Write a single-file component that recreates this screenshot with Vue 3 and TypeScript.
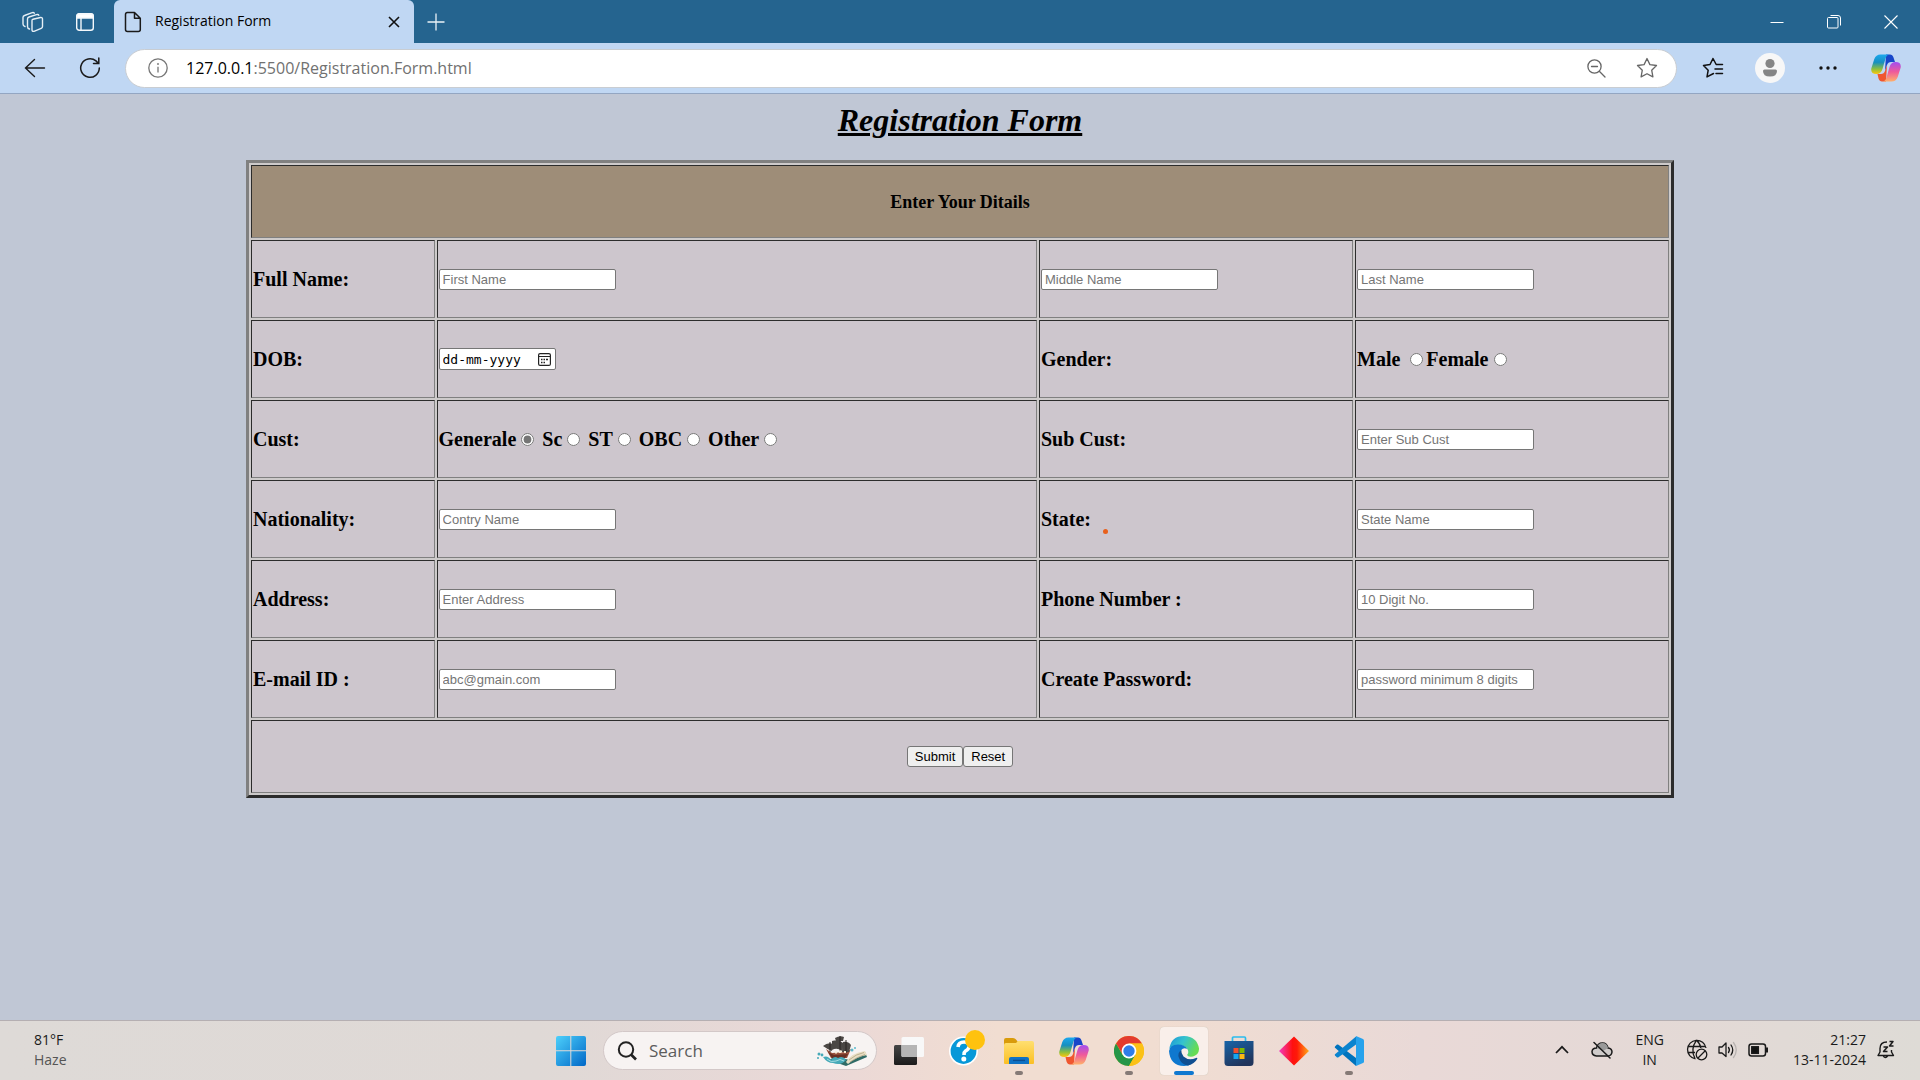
<script setup lang="ts">
import { ref } from 'vue'

interface Choice {
  value: string
  text: string
}

const casts: Choice[] = [
  { value: 'general', text: 'Generale' },
  { value: 'sc', text: 'Sc' },
  { value: 'st', text: 'ST' },
  { value: 'obc', text: 'OBC' },
  { value: 'other', text: 'Other' },
]

const cast = ref('general')
const gender = ref('')
const search = ref('')
</script>

<template>
  <div class="screen">
    <header class="tabs">
      <button class="plain workspaces" aria-label="Workspaces">
        <svg width="22" height="22" viewBox="0 0 22 22" fill="none" stroke="#e6eff6" stroke-width="1.4" stroke-linejoin="round" stroke-linecap="round">
          <path d="M10 9.5 Q10 8.500 11 8.200 L18.500 6.500 Q20.500 6.200 20.500 8 L20.500 15.500 Q20.500 16.800 19.200 17.300 L12 20.300 Q10 20.800 10 18.800 Z" />
          <path d="M7.500 18 Q5.500 17.500 5.500 15.500 L5.500 8 Q5.500 6.500 7 6 L14.500 3.600 Q16.300 3.100 16.800 4.300" />
          <path d="M3 15.500 Q1 15 1 13 L1 6.500 Q1 5 2.500 4.500 L9.500 1.800 Q11.500 1 12.300 2.200" />
        </svg>
      </button>
      <button class="plain actions" aria-label="Tab actions">
        <svg width="18" height="18" viewBox="0 0 18 18" fill="none" stroke="#f4f8fb" stroke-width="1.400">
          <rect x="0.700" y="0.700" width="16.600" height="16.600" rx="2.500" />
          <path d="M1 3 Q1 1 3 1 L15 1 Q17 1 17 3 L17 5 L1 5 Z" fill="#fff" />
          <path d="M5 5 V17" />
        </svg>
      </button>
      <div class="tab">
        <svg width="18" height="22" viewBox="0 0 18 22" fill="none" stroke="#1a1a1a" stroke-width="1.500" stroke-linejoin="round">
          <path d="M3 1.500 H10.500 L16.300 7.300 V18.500 Q16.300 20.500 14.300 20.500 H3.500 Q1.500 20.500 1.500 18.500 V3.500 Q1.500 1.500 3.500 1.500 Z M10.500 1.500 V7.300 H16.300" />
        </svg>
        <span class="tab-title">Registration Form</span>
        <button class="plain" aria-label="Close tab">
          <svg width="12" height="12" viewBox="0 0 12 12" stroke="#111" stroke-width="1.600"><path d="M1 1 L11 11 M11 1 L1 11" /></svg>
        </button>
      </div>
      <button class="plain new-tab" aria-label="New tab">
        <svg width="18" height="18" viewBox="0 0 18 18" stroke="#eaf2f8" stroke-width="1.300"><path d="M9 0.500 V17.500 M0.500 9 H17.500" /></svg>
      </button>
      <div class="window-buttons">
        <button class="plain" aria-label="Minimize">
          <svg width="14" height="14" viewBox="0 0 14 14" stroke="#fff"><path d="M0.500 7.500 H13.500" /></svg>
        </button>
        <button class="plain" aria-label="Restore">
          <svg width="14" height="14" viewBox="0 0 14 14" fill="none" stroke="#fff"><rect x="0.500" y="2.500" width="10.500" height="10.500" rx="1" /><path d="M3.500 0.500 H11 Q13.500 0.500 13.500 3 V10.500" /></svg>
        </button>
        <button class="plain" aria-label="Close">
          <svg width="14" height="14" viewBox="0 0 14 14" stroke="#fff" stroke-width="1.100"><path d="M0.500 0.500 L13.500 13.500 M13.500 0.500 L0.500 13.500" /></svg>
        </button>
      </div>
    </header>

    <nav class="toolbar">
      <button class="plain back" aria-label="Back">
        <svg width="22" height="20" viewBox="0 0 22 20" fill="none" stroke="#1a1a1a" stroke-width="1.400" stroke-linecap="round"><path d="M10.500 1.500 L1.500 10 L10.500 18.500 M1.500 10 H20.500" /></svg>
      </button>
      <button class="plain reload" aria-label="Reload">
        <svg width="22" height="22" viewBox="0 0 22 22" fill="none" stroke="#1a1a1a" stroke-width="1.500" stroke-linecap="round"><path d="M20.300 11 A9.300 9.300 0 1 1 17 3.900 L19.300 6.300 M19.800 1 V6.500 H14.500" /></svg>
      </button>
      <div class="address">
        <svg width="20" height="20" viewBox="0 0 20 20" fill="none" stroke="#767676" stroke-width="1.300"><circle cx="10" cy="10" r="9.200" /><path d="M10 8.800 V14.500" /><circle cx="10" cy="6" r="0.700" fill="#767676" stroke-width="0.600" /></svg>
        <span class="url"><b>127.0.0.1</b>:5500/Registration.Form.html</span>
        <button class="plain zoom" aria-label="Zoom out">
          <svg width="19" height="19" viewBox="0 0 19 19" fill="none" stroke="#666" stroke-width="1.300" stroke-linecap="round"><circle cx="7.500" cy="7.500" r="6.600" /><path d="M12.300 12.300 L18 18 M4.500 7.500 H10.500" /></svg>
        </button>
        <button class="plain" aria-label="Add to favorites">
          <svg width="22" height="22" viewBox="0 0 22 22" fill="none" stroke="#666" stroke-width="1.300" stroke-linejoin="round"><path d="M11 1.500 L13.900 7.600 L20.500 8.500 L15.700 13.200 L16.900 19.900 L11 16.700 L5.100 19.900 L6.300 13.200 L1.500 8.500 L8.100 7.600 Z" /></svg>
        </button>
      </div>
      <button class="plain favorites" aria-label="Favorites">
        <svg width="22" height="22" viewBox="0 0 22 22" fill="none" stroke="#111" stroke-width="1.500" stroke-linejoin="round" stroke-linecap="round"><path d="M20.500 7.500 H14.200 L11 1.500 L8 7.500 L1.500 8.500 L6.200 13.200 L5 19.900 L11.500 16.500 M13 12 H20.500 M14 16.500 H20.500" /></svg>
      </button>
      <button class="plain profile" aria-label="Profile">
        <svg width="30" height="30" viewBox="0 0 30 30"><circle cx="15" cy="15" r="15" fill="#f7f7f7" /><circle cx="15" cy="10.500" r="4.600" fill="#858585" /><path d="M9.500 16.500 H20.500 Q22 16.500 22 18 Q22 23.500 15 23.500 Q8 23.500 8 18 Q8 16.500 9.500 16.500 Z" fill="#858585" /></svg>
      </button>
      <button class="plain more" aria-label="Settings and more">
        <svg width="18" height="4" viewBox="0 0 18 4" fill="#111"><circle cx="2" cy="2" r="1.700" /><circle cx="9" cy="2" r="1.700" /><circle cx="16" cy="2" r="1.700" /></svg>
      </button>
      <button class="plain" aria-label="Copilot">
        <svg width="30" height="28" viewBox="0 0 30 28"><use href="#copilot" /></svg>
      </button>
    </nav>

    <main class="page">
      <h1>Registration Form</h1>
      <form @submit.prevent>
        <table>
          <colgroup>
            <col class="col-label" />
            <col />
            <col class="col-side" />
            <col class="col-side" />
          </colgroup>
          <thead>
            <tr>
              <th colspan="4" class="caption">Enter Your Ditails</th>
            </tr>
          </thead>
          <tbody>
            <tr>
              <th><label for="first">Full Name:</label></th>
              <td><input id="first" class="field" type="text" placeholder="First Name" /></td>
              <td><input class="field" type="text" placeholder="Middle Name" aria-label="Middle Name" /></td>
              <td><input class="field" type="text" placeholder="Last Name" aria-label="Last Name" /></td>
            </tr>
            <tr>
              <th><label for="dob">DOB:</label></th>
              <td>
                <div class="date">
                  <input id="dob" type="text" placeholder="dd-mm-yyyy" />
                  <button type="button" class="plain" aria-label="Open calendar">
                    <svg width="13" height="13" viewBox="0 0 13 13" fill="none" stroke="#222"><rect x="0.600" y="0.600" width="11.800" height="11.800" rx="1.500" stroke-width="1.200" /><path d="M1 3.500 H12" /><path d="M5.500 6.500 H7 M8 6.500 H10 M3 6.500 H4.500 M3 9.500 H4.500 M5.500 9.500 H7" stroke-width="1.300" /></svg>
                  </button>
                </div>
              </td>
              <th>Gender:</th>
              <td>
                <label>Male <input v-model="gender" type="radio" name="gender" value="male" /></label><label>Female<input v-model="gender" type="radio" name="gender" value="female" /></label>
              </td>
            </tr>
            <tr>
              <th>Cust:</th>
              <td>
                <template v-for="c in casts" :key="c.value"><label>{{ c.text }}<input v-model="cast" type="radio" name="cast" :value="c.value" /></label>{{ ' ' }}</template>
              </td>
              <th><label for="sub">Sub Cust:</label></th>
              <td><input id="sub" class="field" type="text" placeholder="Enter Sub Cust" /></td>
            </tr>
            <tr>
              <th><label for="nation">Nationality:</label></th>
              <td><input id="nation" class="field" type="text" placeholder="Contry Name" /></td>
              <th class="state"><label for="state">State:</label><i class="pointer"></i></th>
              <td><input id="state" class="field" type="text" placeholder="State Name" /></td>
            </tr>
            <tr>
              <th><label for="address">Address:</label></th>
              <td><input id="address" class="field" type="text" placeholder="Enter Address" /></td>
              <th><label for="phone">Phone Number :</label></th>
              <td><input id="phone" class="field" type="text" placeholder="10 Digit No." /></td>
            </tr>
            <tr>
              <th><label for="mail">E-mail ID :</label></th>
              <td><input id="mail" class="field" type="email" placeholder="abc@gmain.com" /></td>
              <th><label for="password">Create Password:</label></th>
              <td><input id="password" class="field" type="password" placeholder="password minimum 8 digits" /></td>
            </tr>
            <tr>
              <td colspan="4" class="submit-row">
                <div class="buttons">
                  <button type="submit" class="push">Submit</button>
                  <button type="reset" class="push">Reset</button>
                </div>
              </td>
            </tr>
          </tbody>
        </table>
      </form>
    </main>

    <footer class="taskbar">
      <div class="weather">
        <span>81°F</span>
        <span class="haze">Haze</span>
      </div>

      <div class="dock">
        <button class="plain app" aria-label="Start">
          <svg width="30" height="30" viewBox="0 0 30 30"><path d="M0 2 Q0 0 2 0 H14.300 V14.300 H0 Z M15.300 0 H28 Q30 0 30 2 V14.300 H15.300 Z M0 15.300 H14.300 V30 H2 Q0 30 0 28 Z M15.300 15.300 H30 V28 Q30 30 28 30 H15.300 Z" fill="url(#win)" /></svg>
        </button>
        <label class="search">
          <svg width="20" height="20" viewBox="0 0 20 20" fill="none" stroke="#222" stroke-width="2"><circle cx="9" cy="8.500" r="7.200" /><path d="M14 13.500 L19 18.500" stroke-width="2.600" /></svg>
          <input v-model="search" type="text" placeholder="Search" aria-label="Search" />
          <svg width="52" height="32" viewBox="0 0 52 32">
            <path d="M13 25 L30 31 L51 22 L49 17 L33 25 L20 21 Z" fill="#2f6b66" />
            <path d="M30 27 Q35 18 49 16 L51 20 Q40 22 32 29 Z" fill="#e9dfc4" />
            <path d="M33 25 Q40 19 48 17.500 M34 27 Q41 22 49 19.500" stroke="#a99b7c" stroke-width="0.700" fill="none" />
            <path d="M10 14 L15 23 H31 L35 14 L30 17 L16 18 Z" fill="#98503c" />
            <path d="M12 17 L16 23 H29 L32 19 L18 20 Z" fill="#693024" />
            <path d="M16 6 Q23 4 27 8 L26 16 Q21 12 16 15 Z M27 7 Q32 6 35 10 L33 17 H26 Z M7 11 Q12 7 17 9 L16 16 Q11 14 7 11 Z M19 3 Q24 0 28 2 L27 6 H20 Z" fill="#4b4744" />
            <path d="M24 1 V16 M30 5 V18 M14 7 V17" stroke="#2b2422" />
            <path d="M19 18.500 V16.500 H21 V18.500 Z M23 18 V15.500 H25.500 V18 Z M28 18 V16 H30 V18 Z" fill="#f6ead2" />
            <path d="M7 22 Q12 20 15 25 Q18 20 22 23 Q27 20 30 25 Q25 31 17 28 Q11 28 7 22 Z" fill="#46a9b8" />
            <path d="M11 24 Q15 28 20 26 Q24 23 28 26" stroke="#a5dde2" fill="none" />
            <circle cx="3" cy="19" r="1.500" fill="#46a9b8" /><circle cx="2" cy="23" r="1" fill="#46a9b8" /><circle cx="6" cy="20" r="1.400" fill="#46a9b8" /><circle cx="36" cy="15" r="1.500" fill="#5bb8cb" /><circle cx="39" cy="13" r="1" fill="#5bb8cb" />
          </svg>
        </label>
        <div class="apps">
          <button class="plain app" aria-label="Task view">
            <svg width="30" height="28" viewBox="0 0 30 28"><rect y="8" width="23" height="20" rx="1.500" fill="url(#dark)" /><rect x="7.500" width="22.500" height="20" rx="1.500" fill="#f8f8f8" /><path d="M7.500 8 H23 V20 H9 Q7.500 20 7.500 18.500 Z" fill="#b5b5b5" /></svg>
          </button>
          <button class="plain app" aria-label="Get help">
            <svg class="help" width="30" height="30" viewBox="0 6 30 30">
              <circle cx="14.500" cy="21" r="14.500" fill="#fff" /><circle cx="14.500" cy="21" r="12.900" fill="#0798d8" />
              <path d="M9 17 Q9.500 12 15 12 Q20.500 12 20 17 Q19.500 19.500 16.500 21 Q15 22 15 25" fill="none" stroke="#fff" stroke-width="3.600" /><circle cx="14.800" cy="29" r="2.500" fill="#fff" />
              <circle cx="26" cy="10" r="10" fill="#ffc20e" />
            </svg>
          </button>
          <button class="plain app running" aria-label="File Explorer">
            <svg width="30" height="28" viewBox="0 0 30 28"><path d="M0 3 Q0 1 2 1 H9 Q11 1 12 2.500 L14 5 H28 V12 H0 Z" fill="#d99b0b" /><path d="M0 8 Q0 6 2 6 H12 L14 4 H28 Q30 4 30 6 V26 Q30 27 29 27 H1 Q0 27 0 26 Z" fill="url(#folder)" /><path d="M5 27 V22 Q5 20 7 20 H23 Q25 20 25 22 V27 Z" fill="#0f72c4" /><rect x="9" y="22.700" width="12" height="1.400" fill="#0b4e91" /></svg>
          </button>
          <button class="plain app" aria-label="Copilot">
            <svg width="30" height="28" viewBox="0 0 30 28"><use href="#copilot" /></svg>
          </button>
          <button class="plain app running" aria-label="Chrome">
            <svg width="30" height="30" viewBox="0 0 30 30"><circle cx="15" cy="15" r="15" fill="#fbc116" /><path d="M2 7.500 A15 15 0 0 1 28 7.500 H15 L9 19 Z" fill="#e33b2e" /><path d="M2 7.500 L8.500 18.700 L21.500 18.700 L15 30 A15 15 0 0 1 2 7.500 Z" fill="#269547" /><path d="M15 7.500 H28 A15 15 0 0 1 15 30 L21.500 18.700 Z" fill="#fbc116" /><circle cx="15" cy="15" r="7.400" fill="#fff" /><circle cx="15" cy="15" r="5.700" fill="#2f7de9" /></svg>
          </button>
          <button class="plain app active" aria-label="Edge">
            <svg width="30" height="30" viewBox="0 0 30 30">
              <path d="M0.300 13 Q2 0 15 0 Q28 0.500 30 12.500 Q30.200 18.500 24 20.500 Q18.500 21.200 18.200 18.800 Q20.500 16 18 12.500 Q14 8.500 8 9.500 Q2.500 10.500 0.300 13 Z" fill="url(#edge-top)" />
              <path d="M0 15 Q1 8.500 9 8.500 Q16 8.700 18.200 13 Q14.500 11.200 12.300 14 Q9.500 18 14 23 Q18 27 23 27.500 Q19.500 30 15 30 Q1 29.500 0 15 Z" fill="#0f78cf" />
              <path d="M12.300 14 Q8 17 10 22 Q12.500 29 19 29.500 Q25.500 28 28.300 22.700 Q28.500 21.500 27 22 Q19.500 25 14.500 20.500 Q12 17.500 12.300 14 Z" fill="#104f91" />
            </svg>
          </button>
          <button class="plain app" aria-label="Microsoft Store">
            <svg width="30" height="30" viewBox="0 0 30 30"><path d="M8.500 6 V2 Q8.500 1 9.500 1 H20.500 Q21.500 1 21.500 2 V6" fill="none" stroke="#2bbcee" stroke-width="1.700" /><path d="M0.500 5 H29.500 V26.500 Q29.500 30 26 30 H4 Q0.500 30 0.500 26.500 Z" fill="url(#store)" /><path d="M9.500 12 H14.500 V17 H9.500 Z" fill="#f2502b" /><path d="M15.500 12 H20.500 V17 H15.500 Z" fill="#7eb900" /><path d="M9.500 18 H14.500 V23 H9.500 Z" fill="#16a7f0" /><path d="M15.500 18 H20.500 V23 H15.500 Z" fill="#fcb813" /></svg>
          </button>
          <button class="plain app" aria-label="Diamond">
            <svg width="30" height="30" viewBox="0 0 30 30"><path d="M15 0.500 L30 15 L15 29.500 L0 15 Z" fill="url(#gem)" /></svg>
          </button>
          <button class="plain app running" aria-label="Visual Studio Code">
            <svg width="30" height="30" viewBox="0 0 30 30"><path d="M1 10.500 L3 8.500 Q3.700 8.200 4.500 8.700 L22 22 V30 L1 11.800 Q0.500 11.200 1 10.500 Z" fill="#0073bd" /><path d="M1 19.500 L3 21.500 Q3.700 21.800 4.500 21.300 L22 8.500 V0.500 L1 18.300 Q0.500 18.800 1 19.500 Z" fill="#0b84cf" /><path d="M22 0 L29 3 Q30 3.500 30 4.500 V25.500 Q30 26.500 29 27 L22 30 Z" fill="#27a2ec" /></svg>
          </button>
        </div>
      </div>

      <div class="tray">
        <svg class="spaced" width="14" height="9" viewBox="0 0 14 9" fill="none" stroke="#1a1a1a" stroke-width="1.700"><path d="M1 8 L7 1.800 L13 8" /></svg>
        <svg class="spaced" width="22" height="18" viewBox="0 0 22 18" fill="none" stroke="#1a1a1a" stroke-width="1.500" stroke-linecap="round"><path d="M5.500 15 Q1 14.500 1 10.500 Q1.500 7 5.500 7 Q6.500 2 11.500 2 Q16 2 17 7 Q21 7.500 21 11 Q20.500 15 16.500 15 Z" fill="#cfcbca" /><path d="M6 7 Q7 2 11.500 2 Q16 2 17 7 L12 10 Z" fill="#999" stroke="none" /><path d="M3 1.500 L19 17" /></svg>
        <span class="lang spaced">ENG<br />IN</span>
        <svg width="22" height="22" viewBox="0 0 22 22" fill="none" stroke="#1a1a1a" stroke-width="1.300"><path d="M20 9 A9.300 9.300 0 1 0 9.500 19.800 M1.500 7.500 H19.500 M1.500 13.500 H9 M9 19.500 Q4 10.500 10.500 1.200 M10.500 1.200 Q14.500 5 14.800 9" /><circle cx="15.500" cy="15.500" r="5.300" /><path d="M12 19 L19 12" /></svg>
        <svg width="20" height="18" viewBox="0 0 20 18" fill="none" stroke="#1a1a1a" stroke-width="1.300" stroke-linejoin="round" stroke-linecap="round"><path d="M1 6 H4 L8 2 V15.500 L4 12 H1 Z M10.500 6.500 Q12.300 9 10.500 11.500 M13 4 Q16.500 9 13 14" /><path d="M15.500 1.500 Q21 9 15.500 16.500" stroke="#b9b3b1" /></svg>
        <svg width="21" height="14" viewBox="0 0 21 14" fill="none" stroke="#1a1a1a" stroke-width="1.500"><rect x="1" y="1" width="16.500" height="12" rx="2.500" /><rect x="3.800" y="3.800" width="6.500" height="6.500" fill="#111" /><path d="M19 4.500 V9.500" stroke-width="2" /></svg>
        <span class="clock">21:27<br />13-11-2024</span>
        <svg width="18" height="19" viewBox="0 0 18 19" fill="none" stroke="#1a1a1a" stroke-width="1.400" stroke-linejoin="round"><path d="M10 2 Q3 2 3 8.500 V12 L1 15.500 H16.500 L14.500 12 V10 M6 15.500 Q8 19.500 11 15.500" /><path d="M6.500 7 H10.500 L6.500 11.500 H10.500 M12.500 1.500 H16 L12.500 6 H16.500" stroke-width="1.500" /></svg>
      </div>
    </footer>

    <svg class="defs" width="0" height="0" aria-hidden="true">
      <defs>
        <linearGradient id="win" x1="0" y1="0" x2="1" y2="1"><stop offset="0" stop-color="#4dd0fb" /><stop offset="1" stop-color="#0067c7" /></linearGradient>
        <linearGradient id="dark" x1="0" y1="0" x2="0" y2="1"><stop offset="0" stop-color="#454545" /><stop offset="1" stop-color="#1b1b1b" /></linearGradient>
        <linearGradient id="folder" x1="0" y1="0" x2="0" y2="1"><stop offset="0" stop-color="#ffdf70" /><stop offset="1" stop-color="#fbbf24" /></linearGradient>
        <linearGradient id="edge-top" x1="0" y1="0" x2="1" y2="0.400"><stop offset="0" stop-color="#1b94d8" /><stop offset="0.500" stop-color="#35c3ce" /><stop offset="1" stop-color="#66dc54" /></linearGradient>
        <linearGradient id="store" x1="0" y1="0" x2="0.500" y2="1"><stop offset="0" stop-color="#1764a8" /><stop offset="1" stop-color="#21355c" /></linearGradient>
        <linearGradient id="gem"><stop offset="0" stop-color="#f33cc0" /><stop offset="0.450" stop-color="#ff1010" /><stop offset="0.600" stop-color="#ff1a08" /><stop offset="1" stop-color="#ffab19" /></linearGradient>
        <linearGradient id="cop-left" x1="0" y1="0" x2="0" y2="1"><stop offset="0" stop-color="#1ba8ee" /><stop offset="0.400" stop-color="#168fc0" /><stop offset="0.750" stop-color="#8fbf3c" /><stop offset="1" stop-color="#ffc60b" /></linearGradient>
        <linearGradient id="cop-right" x1="0" y1="0" x2="0" y2="1"><stop offset="0" stop-color="#a24df0" /><stop offset="0.500" stop-color="#ef5a9b" /><stop offset="1" stop-color="#ffb06a" /></linearGradient>
        <g id="copilot">
          <path d="M15 0.500 H19 Q21.500 0.500 22.500 3.500 L24 8 H20 Q17 8 16 11 L14 17 Z" fill="#1746c9" />
          <path d="M15 27.500 H11 Q8.500 27.500 7.500 24.500 L6.500 20 H10 Q13 20 14 17 L16 11 Z" fill="#f0562f" />
          <path d="M9.500 0.500 H18 Q15.500 1 14.500 4.500 L11.500 15 Q10 20 5.500 20 Q-0.500 20 0.300 14.500 L3.300 5 Q5 0.500 9.500 0.500 Z" fill="url(#cop-left)" />
          <path d="M20.500 27.500 H12 Q14.500 27 15.500 23.500 L18.500 13 Q20 8 24.500 8 Q30.500 8 29.700 13.500 L26.700 23 Q25 27.500 20.500 27.500 Z" fill="url(#cop-right)" />
        </g>
      </defs>
    </svg>
  </div>
</template>

<style>
body {
  margin: 0;
}
</style>

<style scoped>
.screen {
  display: flex;
  flex-direction: column;
  min-height: 100vh;
  background: #c0c7d5;
  color: #000;
  font-family: "Open Sans", "Noto Sans", sans-serif;
}
.screen svg {
  display: block;
  flex: none;
}
.screen .defs {
  position: absolute;
}
.plain {
  display: flex;
  align-items: center;
  justify-content: center;
  padding: 0;
  border: 0;
  background: none;
}

.tabs {
  display: flex;
  align-items: center;
  height: 43px;
  background: #25648f;
}
.workspaces {
  margin-left: 22px;
}
.actions {
  margin-left: 32px;
}
.tab {
  display: flex;
  align-items: center;
  box-sizing: border-box;
  width: 300px;
  height: 43px;
  margin-left: 20px;
  padding: 0 14px 0 10px;
  border-radius: 6px 6px 0 0;
  background: #c0d7f3;
}
.tab-title {
  flex: 1;
  margin-left: 13px;
  padding-bottom: 2px;
  font-size: 14px;
  line-height: 20px;
}
.new-tab {
  margin-left: 13px;
}
.window-buttons {
  display: flex;
  gap: 43px;
  margin-left: auto;
  padding-right: 22px;
}

.toolbar {
  display: flex;
  align-items: center;
  height: 50px;
  padding: 0 19px 0 24px;
  border-bottom: 1px solid #93a6c2;
  background: #c0d7f3;
}
.reload {
  margin-left: 33px;
}
.address {
  display: flex;
  flex: 1;
  align-items: center;
  box-sizing: border-box;
  height: 39px;
  margin-left: 24px;
  padding: 0 18px 0 22px;
  border: 1px solid #c9cdd2;
  border-radius: 20px;
  background: #fff;
}
.url {
  flex: 1;
  margin-left: 18px;
  color: #717171;
  font-size: 16px;
  line-height: 24px;
}
.url b {
  color: #000;
  font-weight: 400;
}
.zoom {
  margin-right: 30px;
}
.favorites {
  margin-left: 25px;
}
.profile {
  margin-left: 31px;
}
.more {
  margin: 0 34px;
}

.page {
  flex: 1;
  padding: 8px;
  font-family: "Liberation Serif", serif;
}
h1 {
  margin: 0 0 21px;
  font-size: 32px;
  font-style: italic;
  line-height: 37px;
  text-align: center;
  text-decoration: underline;
}
table {
  width: 75%;
  margin: 0 auto;
  border: 3px solid;
  border-color: #808080 #2c2c2c #2c2c2c #808080;
  border-spacing: 2px;
  background: #cdcaca;
  table-layout: fixed;
}
.col-label {
  width: 13%;
}
.col-side {
  width: 314px;
}
th,
td {
  box-sizing: border-box;
  height: 78px;
  padding: 1px;
  border: 1px solid;
  border-color: #2c2c2c #808080 #808080 #2c2c2c;
  background: #cdc6cd;
  font-size: 20px;
  font-weight: 700;
  line-height: 24px;
  text-align: left;
}
.caption {
  height: 73px;
  background: #9e8d78;
  font-size: 18px;
  text-align: center;
}
.submit-row {
  height: 73px;
}
.field,
.date {
  display: block;
  box-sizing: border-box;
  width: 177px;
  height: 21px;
  margin: 0;
  padding: 1px 3px;
  border: 1px solid #767676;
  border-radius: 2px;
  background: #fff;
  font-family: "Liberation Sans", sans-serif;
  font-size: 13px;
}
.field::placeholder {
  color: #757575;
}
.date {
  display: flex;
  align-items: center;
  justify-content: space-between;
  width: 117px;
  height: 22px;
  padding: 0 4px 0 3px;
}
.date input {
  width: 88px;
  padding: 0;
  border: 0;
  background: none;
  font-family: "DejaVu Sans Mono", monospace;
  font-size: 13px;
}
.date input::placeholder {
  color: #000;
}
input[type="radio"] {
  width: 13px;
  height: 13px;
  margin: 3px 3px 0 5px;
  accent-color: #757575;
}
.state {
  position: relative;
}
.pointer {
  position: absolute;
  top: 48px;
  left: 63px;
  width: 5px;
  height: 5px;
  border-radius: 50%;
  background: #e8601c;
}
.buttons {
  display: flex;
  justify-content: center;
}
.push {
  height: 21px;
  padding: 0 7px;
  border: 1px solid #767676;
  border-radius: 3px;
  background: #efefef;
  color: #000;
  font-family: "Liberation Sans", sans-serif;
  font-size: 13px;
}

.taskbar {
  display: grid;
  grid-template-columns: 1fr auto 1fr;
  align-items: center;
  box-sizing: border-box;
  height: 60px;
  border-top: 1px solid #b5afb2;
  background: linear-gradient(90deg, #dedad7 0%, #dfd9d6 28%, #ead8d7 43%, #f1ddd1 52%, #f1ddd1 60%, #e9d9d7 74%, #e4d9d6 86%, #dedbd6 100%);
  font-size: 14px;
  line-height: 20px;
  color: #1a1a1a;
}
.weather {
  display: flex;
  flex-direction: column;
  padding: 0 0 2px 34px;
}
.haze {
  color: #555;
}
.dock {
  display: flex;
  align-items: center;
  gap: 8px;
}
.apps {
  display: flex;
  gap: 7px;
}
.app {
  position: relative;
  width: 48px;
  height: 48px;
  border-radius: 4px;
}
.help {
  overflow: visible;
}
.active {
  background: #f9efea;
  box-shadow: 0 0 1px #bba;
}
.running::after,
.active::after {
  position: absolute;
  bottom: 0;
  left: 20px;
  width: 8px;
  height: 4px;
  border-radius: 2px;
  background: #857a76;
  content: "";
}
.active::after {
  left: 14px;
  width: 20px;
  background: #0f78d0;
}
.search {
  display: flex;
  align-items: center;
  box-sizing: border-box;
  width: 274px;
  height: 39px;
  padding: 0 8px 0 13px;
  border: 1px solid #d3c8c8;
  border-radius: 20px;
  background: #f7f3f2;
}
.search input {
  flex: 1;
  min-width: 0;
  margin-left: 12px;
  padding: 0;
  border: 0;
  background: none;
  font-family: inherit;
  font-size: 17px;
}
.search input::placeholder {
  color: #5c5c5c;
}
.tray {
  display: flex;
  align-items: center;
  justify-content: flex-end;
  gap: 10px;
  padding: 0 25px 2px 0;
}
.spaced {
  margin-right: 12px;
}
.lang {
  text-align: center;
}
.clock {
  margin: 0 1px 0 14px;
  text-align: right;
}
</style>
